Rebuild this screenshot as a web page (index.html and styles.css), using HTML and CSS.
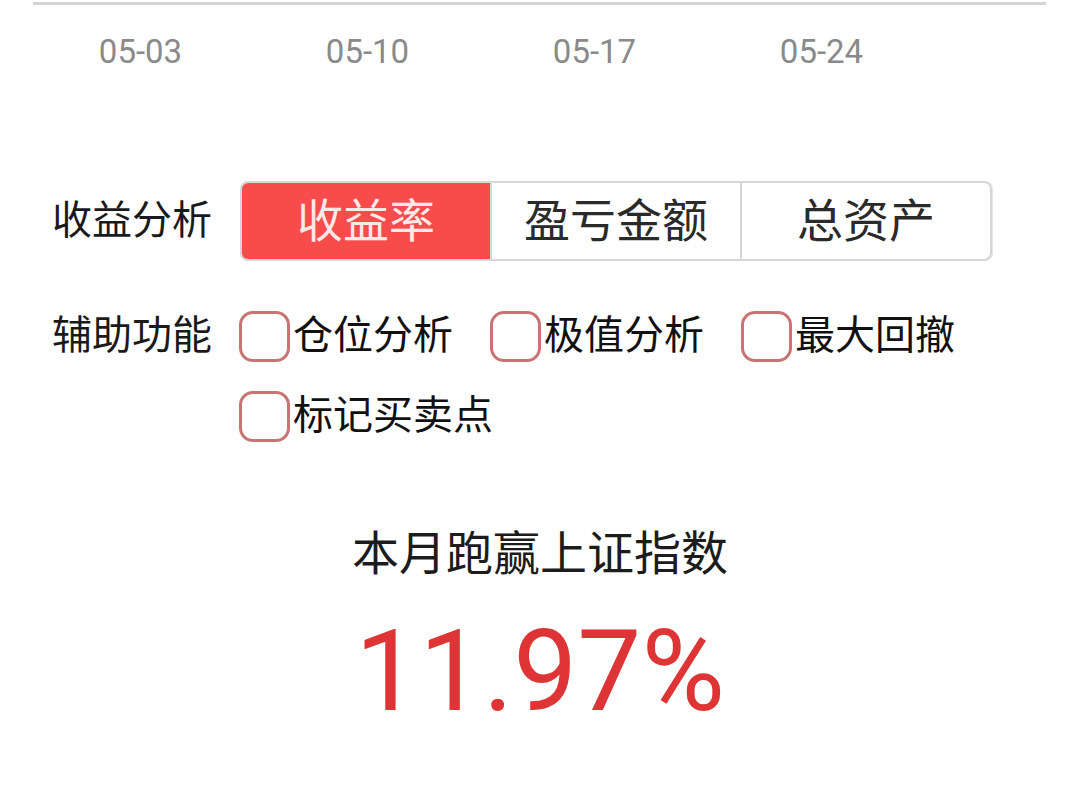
FILE: index.html
```html
<!DOCTYPE html>
<html lang="zh-CN">
<head>
<meta charset="utf-8">
<title>收益分析</title>
<link rel="stylesheet" href="styles.css">
</head>
<body>
<div class="page">
  <div class="axis-line"></div>
  <div class="dates">
    <span class="date">05-03</span>
    <span class="date">05-10</span>
    <span class="date">05-17</span>
    <span class="date">05-24</span>
  </div>

  <div class="row row-seg">
    <div class="label">收益分析</div>
    <div class="segmented">
      <div class="seg active">收益率</div>
      <div class="seg">盈亏金额</div>
      <div class="seg">总资产</div>
    </div>
  </div>

  <div class="row row-aux">
    <div class="label aux-label">辅助功能</div>
    <div class="checks">
      <label class="check"><span class="box"></span><span class="check-text">仓位分析</span></label>
      <label class="check"><span class="box"></span><span class="check-text">极值分析</span></label>
      <label class="check"><span class="box"></span><span class="check-text">最大回撤</span></label>
      <label class="check"><span class="box"></span><span class="check-text">标记买卖点</span></label>
    </div>
  </div>

  <div class="summary">
    <div class="summary-title">本月跑赢上证指数</div>
    <div class="summary-value">11.97%</div>
  </div>
</div>
</body>
</html>
```

FILE: styles.css
```css
html, body {
  margin: 0;
  padding: 0;
  background: #ffffff;
}

body {
  font-family: "Noto Sans CJK SC", "Noto Sans", sans-serif;
  color: #1a1a1a;
}

.page {
  width: 1080px;
  height: 798px;
  overflow: hidden;
}

.axis-line {
  margin: 2px 0 0 33px;
  width: 1013px;
  height: 3px;
  background: #d4d4d4;
}

.dates {
  display: flex;
  padding-left: 27px;
  margin-top: 27px;
}

.date {
  width: 227px;
  text-align: center;
  font-family: Roboto, "Liberation Sans", sans-serif;
  font-size: 33px;
  line-height: 40px;
  color: #8a8a8a;
}

.row {
  display: flex;
  padding-left: 52px;
}

.label {
  width: 188px;
  flex: none;
  font-size: 40px;
  line-height: 72px;
  padding-bottom: 8px;
  color: #1a1a1a;
}

.row-seg {
  margin-top: 109px;
}

.segmented {
  display: flex;
  width: 752px;
  height: 80px;
  box-sizing: border-box;
  border: 2px solid #d6d6d6;
  border-radius: 8px;
  overflow: hidden;
  box-shadow: 1px 0 0 #e6e6e6;
}

.seg {
  flex: 1;
  display: flex;
  align-items: center;
  justify-content: center;
  box-sizing: border-box;
  padding-bottom: 8px;
  font-size: 46px;
  color: #2a2a2a;
  border-left: 2px solid #d6d6d6;
}

.seg:first-child {
  border-left: none;
}

.seg.active {
  background: #f74c4b;
  color: #fde8e8;
}

.row-aux {
  margin-top: 35px;
}

.aux-label {
  width: 187px;
}

.checks {
  display: grid;
  grid-template-columns: repeat(3, 251px);
  grid-auto-rows: 80px;
}

.check {
  display: flex;
  align-items: center;
}

.box {
  width: 51px;
  height: 51px;
  box-sizing: border-box;
  border: 3px solid #c97474;
  border-radius: 14px;
  flex: none;
  margin-right: 3px;
}

.check-text {
  font-size: 40px;
  line-height: 72px;
  padding-bottom: 8px;
  color: #111111;
  white-space: nowrap;
}

.summary {
  margin-top: 64px;
  text-align: center;
}

.summary-title {
  font-size: 47px;
  line-height: 60px;
  color: #1c1c1c;
}

.summary-value {
  margin-top: 32px;
  font-family: Roboto, "Liberation Sans", sans-serif;
  font-size: 114px;
  line-height: 118px;
  color: #de3435;
}
```
